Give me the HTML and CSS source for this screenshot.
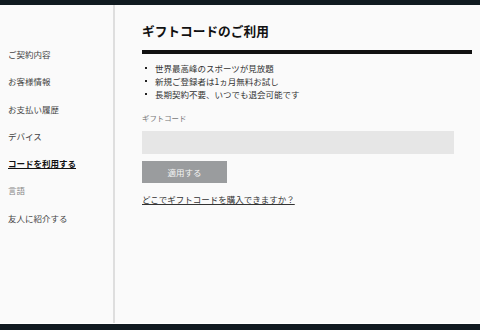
FILE: index.html
```html
<!DOCTYPE html>
<html lang="ja">

<head>
    <meta charset="UTF-8">
    <meta name="viewport" content="width=device-width, initial-scale=1.0">
    <title>ギフトコードのご利用</title>
    <link rel="stylesheet" href="styles.css">
</head>

<body>
    <div class="topbar"></div>

    <div class="page">
        <nav class="sidebar">
            <a href="#">ご契約内容</a>
            <a href="#">お客様情報</a>
            <a href="#">お支払い履歴</a>
            <a href="#">デバイス</a>
            <a href="#" class="active">コードを利用する</a>
            <a href="#" class="muted">言語</a>
            <a href="#">友人に紹介する</a>
        </nav>

        <main class="content">
            <h1>ギフトコードのご利用</h1>
            <div class="rule"></div>

            <ul class="perks">
                <li>世界最高峰のスポーツが見放題</li>
                <li>新規ご登録者は1ヵ月無料お試し</li>
                <li>長期契約不要、いつでも退会可能です</li>
            </ul>

            <form class="gift-form" onsubmit="return false">
                <label for="giftCode">ギフトコード</label>
                <input type="text" id="giftCode" name="giftCode">
                <button type="submit">適用する</button>
            </form>

            <a href="#" class="help-link">どこでギフトコードを購入できますか？</a>
        </main>
    </div>

    <div class="bottombar"></div>
</body>

</html>
```

FILE: styles.css
```css
body {
    font-family: "Noto Sans CJK JP", "Liberation Sans", sans-serif;
    background-color: #fafafa;
    color: #333;
    margin: 0;
    padding: 0;
    height: 330px;
    display: flex;
    flex-direction: column;
    overflow: hidden;
}

.topbar {
    height: 5px;
    background-color: #101a20;
}

.bottombar {
    height: 6px;
    background-color: #101a20;
    border-top: 1px solid #fff;
}

.page {
    flex: 1;
    display: flex;
}

.sidebar {
    width: 113px;
    border-right: 2px solid #dedede;
    padding-top: 36px;
    display: flex;
    flex-direction: column;
}

.sidebar a {
    display: block;
    padding-left: 8px;
    font-size: 8.5px;
    line-height: 27.3px;
    color: #444;
    text-decoration: none;
}

.sidebar a.active {
    color: #111;
    font-weight: bold;
    text-decoration: underline;
}

.sidebar a.muted {
    color: #888;
}

.content {
    flex: 1;
    padding: 16px 8px 0 27px;
}

h1 {
    margin: 0;
    font-size: 12.7px;
    line-height: 20px;
    font-weight: bold;
    color: #111;
}

.rule {
    height: 4px;
    margin-top: 9px;
    background-color: #111;
}

.perks {
    list-style: none;
    margin: 7.5px 0 0;
    padding: 0;
}

.perks li {
    font-size: 8.5px;
    line-height: 13px;
    color: #333;
}

.perks li::before {
    content: "";
    display: inline-block;
    width: 2px;
    height: 2px;
    margin: 0 8px 2px 3px;
    background-color: #222;
    vertical-align: middle;
}

.gift-form {
    display: flex;
    flex-direction: column;
    align-items: flex-start;
    margin-top: 11.5px;
}

.gift-form label {
    font-size: 7.4px;
    line-height: 12px;
    color: #777;
}

.gift-form input {
    width: 312px;
    height: 23px;
    margin-top: 7px;
    box-sizing: border-box;
    border: none;
    background-color: #e6e6e6;
    outline: none;
}

.gift-form button {
    width: 85px;
    height: 22px;
    margin-top: 7px;
    border: none;
    background-color: #9a9c9e;
    color: #f4f4f4;
    font-family: inherit;
    font-size: 8.5px;
    cursor: pointer;
}

.help-link {
    display: inline-block;
    margin-top: 10px;
    font-size: 8.5px;
    line-height: 12px;
    color: #333;
    text-decoration: underline;
}
```
